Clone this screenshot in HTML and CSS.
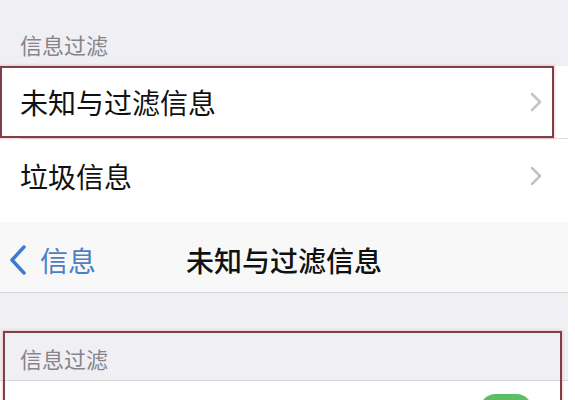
FILE: index.html
```html
<!DOCTYPE html>
<html lang="zh-CN">
<head>
    <meta charset="UTF-8">
    <meta name="viewport" content="width=device-width, initial-scale=1.0">
    <title>未知与过滤信息</title>
    <link rel="stylesheet" href="styles.css">
</head>
<body>
    <div class="screen">
        <div class="section-title">信息过滤</div>

        <div class="list">
            <div class="row marked">
                <span>未知与过滤信息</span>
                <svg class="chevron" width="12" height="20" viewBox="0 0 12 20"><path d="M2 2 L10 10 L2 18" /></svg>
            </div>
            <div class="row">
                <span>垃圾信息</span>
                <svg class="chevron" width="12" height="20" viewBox="0 0 12 20"><path d="M2 2 L10 10 L2 18" /></svg>
            </div>
        </div>

        <div class="navbar">
            <a class="back" href="#">
                <svg width="20" height="30" viewBox="0 0 20 30"><path d="M16 2 L4 15 L16 28" /></svg>
                <span>信息</span>
            </a>
            <h1>未知与过滤信息</h1>
        </div>

        <div class="spacer"></div>

        <div class="group marked-group">
            <div class="group-title">信息过滤</div>
            <div class="row toggle-row">
                <span></span>
                <span class="switch"></span>
            </div>
        </div>
    </div>
</body>
</html>
```

FILE: styles.css
```css
body {
    margin: 0;
    background: #ffffff;
    font-family: "Noto Sans CJK SC", "Noto Sans", sans-serif;
    color: #111;
}

.screen {
    width: 568px;
    height: 400px;
    overflow: hidden;
    background: #ffffff;
}

.section-title {
    height: 66px;
    box-sizing: border-box;
    background: #efeff4;
    display: flex;
    align-items: flex-end;
    padding: 0 0 7px 20px;
    font-size: 22px;
    line-height: 30px;
    color: #85858a;
}

.list {
    background: #fff;
    padding-bottom: 8px;
}

.row {
    position: relative;
    height: 76px;
    display: flex;
    align-items: center;
    justify-content: space-between;
    padding: 0 26px 0 20px;
    font-size: 28px;
    color: #111;
}

.row.marked {
    height: 72px;
}

.row.marked::before {
    content: "";
    position: absolute;
    left: 20px;
    right: 0;
    bottom: -1px;
    border-bottom: 1px solid #dcdce0;
}

.row.marked::after {
    content: "";
    position: absolute;
    top: 0;
    bottom: 0;
    left: 0;
    right: 14px;
    border: 2px solid #7f3f48;
    box-shadow: 0 0 2px 1px rgba(240, 150, 160, 0.45);
}

.chevron path {
    fill: none;
    stroke: #c4c4c8;
    stroke-width: 2.5;
    stroke-linecap: round;
    stroke-linejoin: round;
}

.navbar {
    position: relative;
    height: 71px;
    background: #f8f8f8;
    border-bottom: 1px solid #d6d6da;
    display: flex;
    align-items: center;
    justify-content: center;
    padding-top: 5px;
    box-sizing: border-box;
}

.navbar h1 {
    margin: 0;
    font-size: 28px;
    font-weight: 500;
    color: #111;
}

.back {
    position: absolute;
    left: 8px;
    top: 18px;
    display: flex;
    align-items: center;
    gap: 12px;
    text-decoration: none;
    color: #4a80c4;
    font-size: 28px;
}

.back path {
    fill: none;
    stroke: #3f7bd0;
    stroke-width: 3.5;
    stroke-linecap: round;
    stroke-linejoin: round;
}

.spacer {
    height: 38px;
    background: #efeff4;
}

.group {
    position: relative;
    background: #efeff4;
}

.marked-group::after {
    content: "";
    position: absolute;
    top: 0;
    bottom: -20px;
    left: 3px;
    right: 6px;
    border: 2px solid #7f3f48;
    box-shadow: 0 0 2px 1px rgba(240, 150, 160, 0.45);
}

.group-title {
    height: 50px;
    display: flex;
    align-items: center;
    padding: 4px 0 0 20px;
    box-sizing: border-box;
    border-bottom: 1px solid #d8d8dc;
    font-size: 22px;
    color: #85858a;
}

.toggle-row {
    height: 56px;
    background: #fff;
    padding-right: 36px;
}

.switch {
    width: 52px;
    height: 31px;
    border-radius: 16px;
    background: #5bbf62;
}
```
